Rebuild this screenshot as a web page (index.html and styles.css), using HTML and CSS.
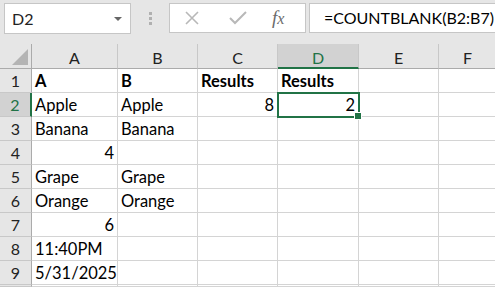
FILE: index.html
```html
<!DOCTYPE html>
<html lang="en">
  <head>
    <meta charset="UTF-8" />
    <title>COUNTBLANK</title>
    <link rel="stylesheet" href="styles.css">
  </head>
  <body>
    <div class="toolbar">
      <div class="name-box">
        <span>D2</span>
        <span class="caret"></span>
      </div>
      <div class="grip"><i></i><i></i><i></i></div>
      <div class="fx-buttons">
        <svg class="icon" width="16" height="14" viewBox="0 0 16 14">
          <path d="M2 1 L14 13 M14 1 L2 13" stroke="#b8b8b8" stroke-width="1.6" fill="none"/>
        </svg>
        <svg class="icon" width="18" height="14" viewBox="0 0 18 14">
          <path d="M1 7 L6 12 L17 1" stroke="#b8b8b8" stroke-width="2" fill="none"/>
        </svg>
        <span class="fx">f<span class="fx-x">x</span></span>
      </div>
      <div class="formula">=COUNTBLANK(B2:B7)</div>
    </div>

    <div class="sheet">
      <div class="corner"><span class="tri"></span></div>
      <div class="col-head">A</div>
      <div class="col-head">B</div>
      <div class="col-head">C</div>
      <div class="col-head active">D</div>
      <div class="col-head">E</div>
      <div class="col-head">F</div>

      <div class="row-head">1</div>
      <div class="cell bold">A</div>
      <div class="cell bold">B</div>
      <div class="cell bold">Results</div>
      <div class="cell bold">Results</div>
      <div class="cell"></div>
      <div class="cell"></div>

      <div class="row-head active">2</div>
      <div class="cell">Apple</div>
      <div class="cell">Apple</div>
      <div class="cell num">8</div>
      <div class="cell num selected">2</div>
      <div class="cell"></div>
      <div class="cell"></div>

      <div class="row-head">3</div>
      <div class="cell">Banana</div>
      <div class="cell">Banana</div>
      <div class="cell"></div>
      <div class="cell"></div>
      <div class="cell"></div>
      <div class="cell"></div>

      <div class="row-head">4</div>
      <div class="cell num">4</div>
      <div class="cell"></div>
      <div class="cell"></div>
      <div class="cell"></div>
      <div class="cell"></div>
      <div class="cell"></div>

      <div class="row-head">5</div>
      <div class="cell">Grape</div>
      <div class="cell">Grape</div>
      <div class="cell"></div>
      <div class="cell"></div>
      <div class="cell"></div>
      <div class="cell"></div>

      <div class="row-head">6</div>
      <div class="cell">Orange</div>
      <div class="cell">Orange</div>
      <div class="cell"></div>
      <div class="cell"></div>
      <div class="cell"></div>
      <div class="cell"></div>

      <div class="row-head">7</div>
      <div class="cell num">6</div>
      <div class="cell"></div>
      <div class="cell"></div>
      <div class="cell"></div>
      <div class="cell"></div>
      <div class="cell"></div>

      <div class="row-head">8</div>
      <div class="cell">11:40PM</div>
      <div class="cell"></div>
      <div class="cell"></div>
      <div class="cell"></div>
      <div class="cell"></div>
      <div class="cell"></div>

      <div class="row-head">9</div>
      <div class="cell num">5/31/2025</div>
      <div class="cell"></div>
      <div class="cell"></div>
      <div class="cell"></div>
      <div class="cell"></div>
      <div class="cell"></div>

      <div class="row-head"></div>
      <div class="cell"></div>
      <div class="cell"></div>
      <div class="cell"></div>
      <div class="cell"></div>
      <div class="cell"></div>
      <div class="cell"></div>
    </div>
  </body>
</html>
```

FILE: styles.css
```css
* {
  margin: 0;
  padding: 0;
  box-sizing: border-box;
}

body {
  font-family: Lato, "Liberation Sans", sans-serif;
  background: #e6e6e6;
  width: 495px;
  height: 287px;
  overflow: hidden;
  color: #000;
}

/* Formula bar */
.toolbar {
  height: 44px;
  display: flex;
  align-items: flex-start;
  padding: 3px 0 0 4px;
}

.name-box {
  width: 127px;
  height: 31px;
  background: #fff;
  border: 1px solid #c6c6c6;
  display: flex;
  align-items: center;
  justify-content: space-between;
  padding: 0 8px 0 7px;
  font-size: 16px;
  color: #222;
}

.caret {
  width: 0;
  height: 0;
  border-left: 4px solid transparent;
  border-right: 4px solid transparent;
  border-top: 4px solid #666;
}

.grip {
  width: 38px;
  height: 30px;
  display: flex;
  flex-direction: column;
  align-items: center;
  justify-content: center;
  gap: 2px;
}

.grip i {
  width: 3px;
  height: 3px;
  background: #b0b0b0;
}

.fx-buttons {
  width: 137px;
  height: 30px;
  background: #fff;
  border: 1px solid #c6c6c6;
  display: flex;
  align-items: center;
  padding-left: 14px;
}

.fx-buttons .icon:first-child {
  margin-right: 29px;
}

.fx {
  margin-left: 25px;
  font-family: "Liberation Serif", serif;
  font-style: italic;
  font-size: 19px;
  color: #6b6b6b;
}

.fx-x {
  font-size: 16px;
}

.formula {
  flex: 1;
  height: 30px;
  margin-left: 3px;
  background: #fff;
  border: 1px solid #c6c6c6;
  border-right: none;
  padding-left: 14px;
  font-size: 16px;
  line-height: 28px;
  white-space: nowrap;
}

/* Grid */
.sheet {
  display: grid;
  grid-template-columns: 32px 86px 80px 80px 81px 80px 57px;
  grid-template-rows: 25px repeat(9, 24px) 2px;
  background: #fff;
}

.corner,
.col-head,
.row-head {
  background: #e6e6e6;
  color: #222;
  font-size: 16px;
  display: flex;
  align-items: center;
  justify-content: center;
}

.corner {
  border-right: 1px solid #ababab;
  border-bottom: 1px solid #ababab;
  justify-content: flex-end;
  align-items: flex-end;
  padding: 0 3px 3px 0;
}

.tri {
  width: 0;
  height: 0;
  border-left: 16px solid transparent;
  border-bottom: 16px solid #b4b4b4;
}

.col-head {
  border-bottom: 1px solid #ababab;
  border-right: 1px solid #c8c8c8;
  padding-top: 3px;
}

.col-head:nth-child(7) {
  border-right: none;
}

.row-head {
  border-right: 1px solid #ababab;
  border-bottom: 1px solid #c8c8c8;
}

.col-head.active {
  background: #d2d2d2;
  color: #217346;
  border-bottom: 2px solid #217346;
}

.row-head.active {
  background: #d2d2d2;
  color: #217346;
  border-right: 2px solid #217346;
}

.cell {
  border-right: 1px solid #d4d4d4;
  border-bottom: 1px solid #d4d4d4;
  font-size: 16.5px;
  line-height: 22px;
  padding: 1px 3px 0 3px;
  white-space: nowrap;
  overflow: hidden;
}

.bold {
  font-weight: 700;
  overflow: visible;
}

.num {
  text-align: right;
}

.selected {
  position: relative;
  overflow: visible;
  outline: 2px solid #217346;
  outline-offset: -1px;
  z-index: 1;
}

.selected::after {
  content: "";
  position: absolute;
  right: -4px;
  bottom: -4px;
  width: 6px;
  height: 6px;
  background: #217346;
  border: 1px solid #fff;
}
```
